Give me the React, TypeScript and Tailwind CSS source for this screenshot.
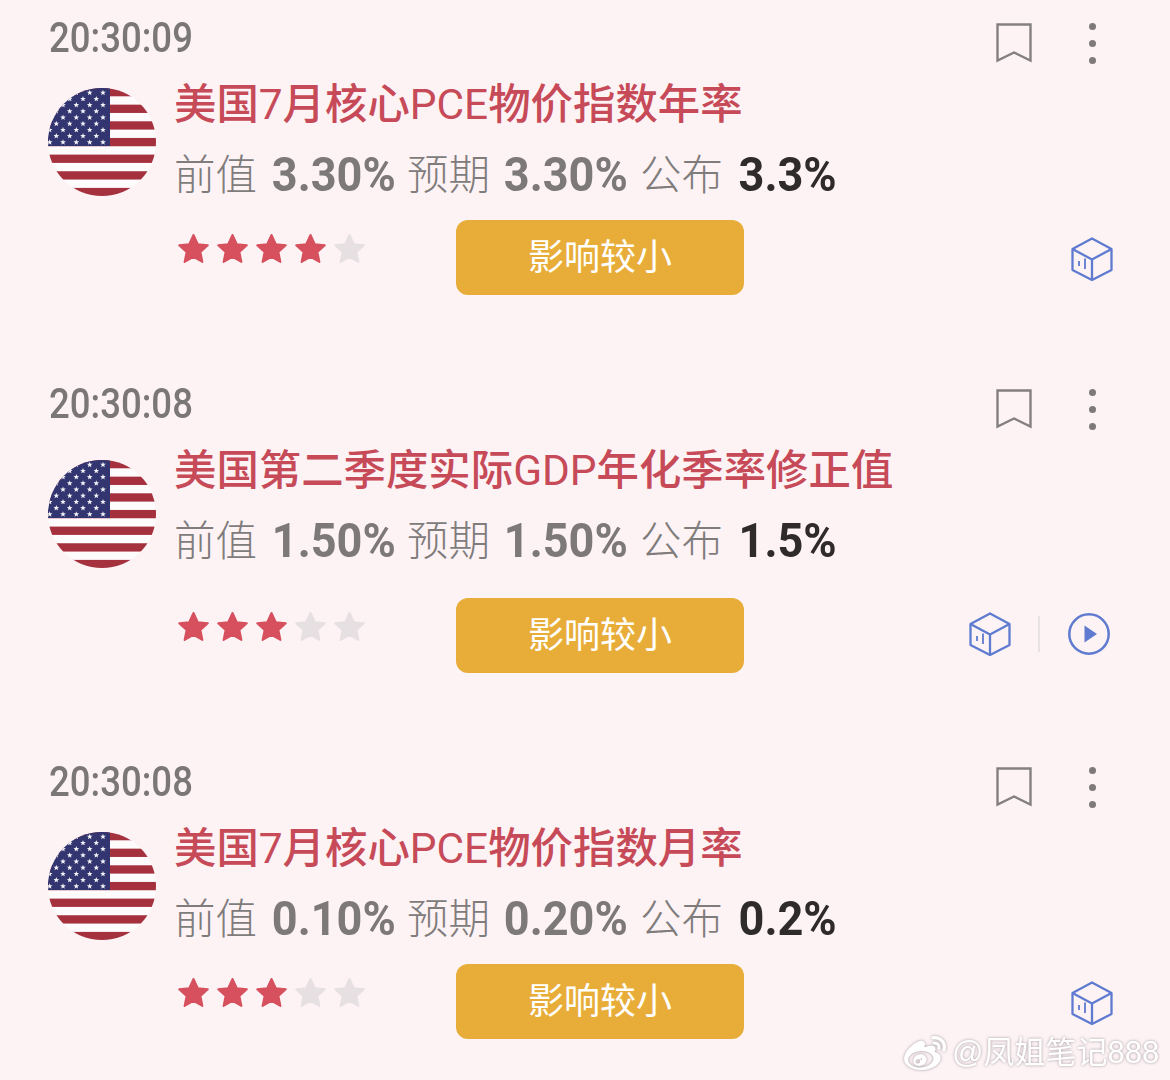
import { SiSinaweibo } from "react-icons/si";

const CJK = "font-['Roboto','Noto_Sans_CJK_SC',sans-serif]";

const starRows: [number, number][] = [];
for (let r = 0; r < 9; r++) {
  const xs = r % 2 === 0 ? [1.7, 15, 28.3, 41.7, 55] : [8.3, 21.7, 35, 48.3];
  xs.forEach((x) => starRows.push([x, 4.7 + r * 6.2]));
}

function starPts(cx: number, cy: number, R: number) {
  const p: string[] = [];
  for (let i = 0; i < 10; i++) {
    const r = i % 2 === 0 ? R : R * 0.42;
    const a = -Math.PI / 2 + (i * Math.PI) / 5;
    p.push(`${(cx + r * Math.cos(a)).toFixed(2)},${(cy + r * Math.sin(a)).toFixed(2)}`);
  }
  return p.join(" ");
}

function Flag({ id }: { id: string }) {
  return (
    <svg width="108" height="108" viewBox="0 0 108 108" className="block">
      <defs>
        <clipPath id={id}>
          <circle cx="54" cy="54" r="54" />
        </clipPath>
      </defs>
      <g clipPath={`url(#${id})`}>
        <rect width="108" height="108" fill="#fdfbfb" />
        {Array.from({ length: 7 }).map((_, i) => (
          <rect key={i} x="0" y={i * 16.65} width="108" height="8.3" fill="#a5303e" />
        ))}
        <rect x="0" y="0" width="62" height="58" fill="#32356f" />
        {starRows.map(([x, y], i) => (
          <polygon key={i} points={starPts(x, y, 3)} fill="#f2f2f7" />
        ))}
      </g>
    </svg>
  );
}

function Star({ on }: { on: boolean }) {
  return (
    <svg width="33" height="32" viewBox="0 0 33 32" className="block">
      <polygon
        points="16.5,2 20.8,11.2 30.8,12.3 23.4,19 25.4,29 16.5,24 7.6,29 9.6,19 2.2,12.3 12.2,11.2"
        fill={on ? "#d6505d" : "#e6e0e2"}
        stroke={on ? "#d6505d" : "#e6e0e2"}
        strokeWidth="2"
        strokeLinejoin="round"
      />
    </svg>
  );
}

function Cube() {
  return (
    <svg width="42" height="44" viewBox="0 0 42 44" fill="none" stroke="#5f7bcf" strokeWidth="2.3" strokeLinejoin="round" className="block">
      <path d="M21 1.5 40.5 12v21L21 43 1.500 33V12Z" />
      <path d="M1.500 12 21 22.500 40.500 12M21 22.500V43" />
      <path d="M8 24v5M14 21.500v10.500" strokeWidth="1.800" />
    </svg>
  );
}

function Play() {
  return (
    <svg width="42" height="42" viewBox="0 0 42 42" className="block">
      <circle cx="21" cy="21" r="19.700" fill="none" stroke="#5f7bcf" strokeWidth="2.500" />
      <polygon points="16.500,12.500 29,21 16.500,29.500" fill="#5f7bcf" />
    </svg>
  );
}

function Bookmark() {
  return (
    <svg width="36" height="40" viewBox="0 0 36 40" fill="none" stroke="#858080" strokeWidth="2.400" className="block">
      <path d="M1.500 1.500h33v36L18 29.500 1.500 37.500Z" />
    </svg>
  );
}

function Dots() {
  return (
    <div className="flex flex-col gap-[10px]">
      <div className="h-[7px] w-[7px] rounded-full bg-[#7f7a7a]" />
      <div className="h-[7px] w-[7px] rounded-full bg-[#7f7a7a]" />
      <div className="h-[7px] w-[7px] rounded-full bg-[#7f7a7a]" />
    </div>
  );
}

type ItemProps = {
  id: string;
  time: string;
  title: string;
  prev: string;
  forecast: string;
  actual: string;
  stars: number;
  flagMt: string;
  rowMt: string;
  actionsMt: string;
  play?: boolean;
};

function Num({ value, color }: { value: string; color: string }) {
  return (
    <span className={`${color} inline-block origin-right scale-x-[0.92] text-right text-[49px] font-bold`}>{value}</span>
  );
}

function Title({ text }: { text: string }) {
  return (
    <>
      {text.split(/([0-9A-Z]+)/).map((part, i) =>
        i % 2 === 1 ? (
          <span key={i} className="font-normal">{part}</span>
        ) : (
          <span key={i}>{part}</span>
        )
      )}
    </>
  );
}

function Item({ id, time, title, prev, forecast, actual, stars, flagMt, rowMt, actionsMt, play }: ItemProps) {
  return (
    <section className="pb-[83px] pl-[48px] pr-[57px]">
      <header className="flex h-[50px] items-center">
        <span className={`${CJK} ml-px inline-block origin-left scale-x-[0.85] text-[43px] leading-[50px] font-medium whitespace-nowrap text-[#7b7777]`}>
          {time}
        </span>
        <div className="mt-3 ml-auto flex items-center">
          <Bookmark />
          <div className="mr-[17px] ml-[57px]">
            <Dots />
          </div>
        </div>
      </header>
      <div className="flex">
        <div className={`${flagMt} w-[108px] shrink-0`}>
          <Flag id={id} />
        </div>
        <div className="ml-[19px] flex-1">
          <h2 className={`${CJK} mt-[14px] -ml-px h-[58px] text-[42.400px] leading-[58px] font-medium whitespace-nowrap text-[#c64a58]`}>
            <Title text={title} />
          </h2>
          <div className={`${CJK} mt-3 -ml-px grid h-[58px] grid-cols-[82px_140px_94px_138px_94px_115px] items-center text-[41.500px] leading-[58px] text-[#807c7c]`}>
            <span className="font-light whitespace-nowrap">前值</span>
            <span className="text-right"><Num value={prev} color="text-[#7d7979]" /></span>
            <span className="pl-[11px] font-light whitespace-nowrap">预期</span>
            <span className="text-right"><Num value={forecast} color="text-[#7d7979]" /></span>
            <span className="pl-[12px] font-light whitespace-nowrap">公布</span>
            <span className="text-right"><Num value={actual} color="text-[#2f2b2b]" /></span>
          </div>
          <div className={`${rowMt} flex items-start`}>
            <div className="mt-[13px] flex w-[281px] gap-[6px] pl-[2px]">
              {[0, 1, 2, 3, 4].map((i) => (
                <Star key={i} on={i < stars} />
              ))}
            </div>
            <button className={`${CJK} h-[75px] w-[288px] rounded-[12px] bg-[#e8ad38] text-center text-[36px] leading-[70px] font-normal text-white`}>
              影响较小
            </button>
            <div className={`${actionsMt} ml-auto flex items-center`}>
              <Cube />
              {play && (
                <>
                  <div className="mr-[28px] ml-[27px] h-[36px] w-[2px] bg-[#e8e2e4]" />
                  <div className="mr-[3px]">
                    <Play />
                  </div>
                </>
              )}
            </div>
          </div>
        </div>
      </div>
    </section>
  );
}

export default function App() {
  return (
    <div className="relative h-[1080px] w-[1170px] overflow-hidden bg-[#fdf3f5] pt-3">
      <Item id="f1" time="20:30:09" title="美国7月核心PCE物价指数年率" prev="3.30%" forecast="3.30%" actual="3.3%" stars={4} flagMt="mt-[26px]" rowMt="mt-4" actionsMt="mt-[17px]" />
      <Item id="f2" time="20:30:08" title="美国第二季度实际GDP年化季率修正值" prev="1.50%" forecast="1.50%" actual="1.5%" stars={3} flagMt="mt-[32px]" rowMt="mt-7" actionsMt="mt-[14px]" play />
      <Item id="f3" time="20:30:08" title="美国7月核心PCE物价指数月率" prev="0.10%" forecast="0.20%" actual="0.2%" stars={3} flagMt="mt-[26px]" rowMt="mt-4" actionsMt="mt-[17px]" />
      <div className="absolute top-[1032px] left-[904px] flex items-center text-white [filter:drop-shadow(0_0_1.500px_rgba(90,80,85,0.55))]">
        <SiSinaweibo size={42} />
        <span className="ml-[6px] font-['Liberation_Sans','Noto_Sans_CJK_SC',sans-serif] text-[31px] leading-[40px] whitespace-nowrap">@凤姐笔记888</span>
      </div>
    </div>
  );
}
